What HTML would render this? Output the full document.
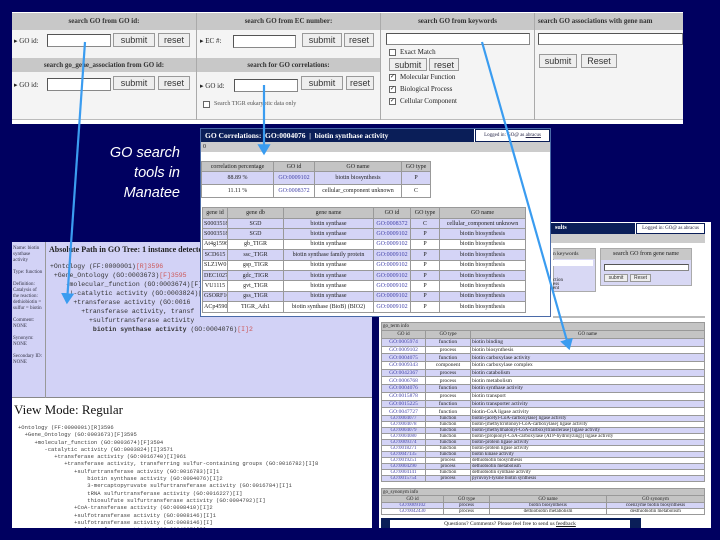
<!DOCTYPE html>
<html><head><meta charset="utf-8">
<style>
*{margin:0;padding:0;box-sizing:border-box}
body{width:720px;height:540px;background:#000060;position:relative;overflow:hidden;font-family:"Liberation Serif",serif;font-size:7px;color:#222}
.a{position:absolute}
.hd{background:#c8c8c8;text-align:center;font-weight:bold;font-size:7px;line-height:16px;color:#333}
.inp{position:absolute;background:#fff;border:1px solid #888;border-top-color:#555;border-left-color:#555}
.btn{position:absolute;background:#eee;border:1px solid #999;font-family:"Liberation Sans",sans-serif;font-size:9px;text-align:center;line-height:12px;color:#333}
.cb{position:absolute;width:7px;height:7px;border:1px solid #666;background:#fff;font-size:6px;line-height:5px;text-align:center}
table{border-collapse:collapse;position:absolute;table-layout:fixed}
td{border:1px solid #999;text-align:center;font-size:6px;line-height:1;white-space:nowrap;overflow:hidden;padding:0 1px}
.sm td{font-size:5px;line-height:5px;height:6px}
.md td{font-size:5.5px;line-height:6px;height:7.7px}
.g td{background:#c4c4c4}
.l td{background:#d4d4f6}
.w td{background:#fff}
.mono{font-family:"Liberation Mono",monospace;font-size:6.5px;white-space:pre;line-height:9px;color:#333}
.mono2{font-family:"Liberation Mono",monospace;font-size:5.5px;white-space:pre;line-height:7.3px;color:#444}
.bl{color:#44a}
</style></head><body>

<!-- top panel -->
<div class="a" style="left:12px;top:12px;width:671px;height:112px;background:#fff"></div>
<div class="a" style="left:12px;top:13px;width:671px;height:107px;background:#f4f4f4;border-bottom:1px solid #bbb"></div>
<div class="a hd" style="left:12px;top:13px;width:184px;height:17px">search GO from GO id:</div>
<div class="a hd" style="left:197px;top:13px;width:183px;height:17px">search GO from EC number:</div>
<div class="a hd" style="left:381px;top:13px;width:153px;height:17px">search GO from keywords</div>
<div class="a hd" style="left:535px;top:13px;width:148px;height:17px;text-align:left;padding-left:3px">search GO associations with gene nam</div>
<div class="a hd" style="left:12px;top:58px;width:184px;height:14px;line-height:14px">search go_gene_association from GO id:</div>
<div class="a hd" style="left:197px;top:58px;width:183px;height:14px;line-height:14px">search for GO correlations:</div>
<div class="a" style="left:196px;top:13px;width:1px;height:107px;background:#aaa"></div>
<div class="a" style="left:380px;top:13px;width:1px;height:107px;background:#aaa"></div>
<div class="a" style="left:534px;top:13px;width:1px;height:107px;background:#aaa"></div>
<div class="a" style="left:14px;top:37px;font-size:7px">▸ GO id:</div>
<div class="inp" style="left:47px;top:34px;width:64px;height:13px"></div>
<div class="btn" style="left:113px;top:33px;width:42px;height:14px">submit</div>
<div class="btn" style="left:158px;top:33px;width:32px;height:14px">reset</div>
<div class="a" style="left:200px;top:37px">▸ EC #:</div>
<div class="inp" style="left:233px;top:35px;width:63px;height:13px"></div>
<div class="btn" style="left:302px;top:33px;width:40px;height:14px">submit</div>
<div class="btn" style="left:344px;top:33px;width:30px;height:14px">reset</div>
<div class="a" style="left:14px;top:81px">▸ GO id:</div>
<div class="inp" style="left:47px;top:78px;width:64px;height:13px"></div>
<div class="btn" style="left:113px;top:76px;width:42px;height:14px">submit</div>
<div class="btn" style="left:158px;top:76px;width:32px;height:14px">reset</div>
<div class="a" style="left:200px;top:82px">▸ GO id:</div>
<div class="inp" style="left:234px;top:79px;width:64px;height:13px"></div>
<div class="btn" style="left:301px;top:76px;width:42px;height:14px">submit</div>
<div class="btn" style="left:346px;top:76px;width:28px;height:14px">reset</div>
<div class="cb" style="left:203px;top:101px"></div><div class="a" style="left:214px;top:101px;font-size:6px;color:#555">Search TIGR eukaryotic data only</div>
<div class="inp" style="left:386px;top:33px;width:144px;height:12px"></div>
<div class="cb" style="left:389px;top:49px"></div><div class="a" style="left:400px;top:48px">Exact Match</div>
<div class="btn" style="left:389px;top:58px;width:38px;height:13px">submit</div>
<div class="btn" style="left:429px;top:58px;width:30px;height:13px">reset</div>
<div class="cb" style="left:389px;top:74px">✓</div><div class="a" style="left:400px;top:73px">Molecular Function</div>
<div class="cb" style="left:389px;top:86px">✓</div><div class="a" style="left:400px;top:85px">Biological Process</div>
<div class="cb" style="left:389px;top:98px">✓</div><div class="a" style="left:400px;top:97px">Cellular Component</div>
<div class="inp" style="left:538px;top:33px;width:145px;height:12px"></div>
<div class="btn" style="left:539px;top:54px;width:38px;height:14px">submit</div>
<div class="btn" style="left:581px;top:54px;width:36px;height:14px">Reset</div>

<!-- caption -->
<div class="a" style="left:80px;top:143px;width:100px;text-align:right;color:#fff;font-family:'Liberation Sans',sans-serif;font-style:italic;font-size:14.5px;line-height:20px">GO search<br>tools in<br>Manatee</div>

<!-- right panel -->
<div class="a" style="left:379px;top:222px;width:332px;height:306px;background:#fff;overflow:hidden">
<div class="a" style="left:0;top:1px;width:256px;height:11px;background:#0a1e58;color:#fff;font-size:6px;font-weight:bold;line-height:11px;padding-left:176px">sults</div>
<div class="a" style="left:257px;top:1px;width:69px;height:11px;border:1px solid #0a1e58;font-size:5px;line-height:9px;text-align:center;color:#224">Logged in: GO@ as abracus</div>
<div class="a" style="left:0;top:12px;width:326px;height:9px;background:#ccc"></div>
<div class="a" style="left:174px;top:26px;width:43px;height:44px;background:#d8d8f4;border:1px solid #aaa"></div>
<div class="a" style="left:174px;top:27px;width:42px;height:10px;background:#c8c8c8;font-size:5.5px;line-height:10px">n keywords</div>
<div class="a" style="left:174px;top:38px;width:40px;height:6px;background:#fff"></div>
<div class="a" style="left:174px;top:57px;font-size:5px;line-height:4px">ction<br>ess<br>ent</div>
<div class="a" style="left:221px;top:26px;width:92px;height:38px;background:#d8d8f4;border:1px solid #aaa"></div>
<div class="a" style="left:222px;top:27px;width:90px;height:11px;background:#c8c8c8;font-size:6px;line-height:11px;text-align:center">search GO from gene name</div>
<div class="inp" style="left:225px;top:42px;width:85px;height:7px"></div>
<div class="btn" style="left:225px;top:52px;width:24px;height:8px;font-size:5px;line-height:6px">submit</div>
<div class="btn" style="left:251px;top:52px;width:21px;height:8px;font-size:5px;line-height:6px">Reset</div>
<div class="a" style="left:174px;top:94px;width:152px;height:2px;background:#bbb"></div>

<table style="left:2px;top:100px;width:324px">
<col style="width:44px"><col style="width:45px"><col>
<tr class="g sm"><td colspan="3" style="text-align:left;height:8px">go_term info</td></tr>
<tr class="g sm"><td style="height:8px">GO id</td><td>GO type</td><td>GO name</td></tr>
<tr class="l md"><td class="bl">GO:0005974</td><td>function</td><td style="text-align:left">biotin binding</td></tr>
<tr class="w md"><td class="bl">GO:0009102</td><td>process</td><td style="text-align:left">biotin biosynthesis</td></tr>
<tr class="l md"><td class="bl">GO:0004075</td><td>function</td><td style="text-align:left">biotin carboxylase activity</td></tr>
<tr class="w md"><td class="bl">GO:0009343</td><td>component</td><td style="text-align:left">biotin carboxylase complex</td></tr>
<tr class="l md"><td class="bl">GO:0042367</td><td>process</td><td style="text-align:left">biotin catabolism</td></tr>
<tr class="w md"><td class="bl">GO:0006768</td><td>process</td><td style="text-align:left">biotin metabolism</td></tr>
<tr class="l md"><td class="bl">GO:0004076</td><td>function</td><td style="text-align:left">biotin synthase activity</td></tr>
<tr class="w md"><td class="bl">GO:0015878</td><td>process</td><td style="text-align:left">biotin transport</td></tr>
<tr class="l md"><td class="bl">GO:0015225</td><td>function</td><td style="text-align:left">biotin transporter activity</td></tr>
<tr class="w md"><td class="bl">GO:0047727</td><td>function</td><td style="text-align:left">biotin-CoA ligase activity</td></tr>
<tr class="l sm"><td class="bl">GO:0004077</td><td>function</td><td style="text-align:left">biotin-[acetyl-CoA-carboxylase] ligase activity</td></tr>
<tr class="w sm"><td class="bl">GO:0004078</td><td>function</td><td style="text-align:left">biotin-[methylcrotonoyl-CoA-carboxylase] ligase activity</td></tr>
<tr class="l sm"><td class="bl">GO:0004079</td><td>function</td><td style="text-align:left">biotin-[methylmalonyl-CoA-carboxyltransferase] ligase activity</td></tr>
<tr class="w sm"><td class="bl">GO:0004080</td><td>function</td><td style="text-align:left">biotin-[propionyl-CoA-carboxylase (ATP-hydrolyzing)] ligase activity</td></tr>
<tr class="l sm"><td class="bl">GO:0009374</td><td>function</td><td style="text-align:left">biotin-protein ligase activity</td></tr>
<tr class="w sm"><td class="bl">GO:0018271</td><td>function</td><td style="text-align:left">biotin-protein ligase activity</td></tr>
<tr class="l sm"><td class="bl">GO:0047135</td><td>function</td><td style="text-align:left">biotin kinase activity</td></tr>
<tr class="w sm"><td class="bl">GO:0019251</td><td>process</td><td style="text-align:left">dethiobiotin biosynthesis</td></tr>
<tr class="l sm"><td class="bl">GO:0004290</td><td>process</td><td style="text-align:left">dethiobiotin metabolism</td></tr>
<tr class="w sm"><td class="bl">GO:0004141</td><td>function</td><td style="text-align:left">dethiobiotin synthase activity</td></tr>
<tr class="l sm"><td class="bl">GO:0015754</td><td>process</td><td style="text-align:left">pyruvoyl-lysine biotin synthesis</td></tr>
</table>
<table style="left:2px;top:266px;width:324px">
<col style="width:62px"><col style="width:46px"><col><col style="width:98px">
<tr class="g sm"><td colspan="4" style="text-align:left;height:7px">go_synonym info</td></tr>
<tr class="g sm"><td style="height:7px">GO id</td><td>GO type</td><td>GO name</td><td>GO synonym</td></tr>
<tr class="l sm"><td class="bl">GO:0009102</td><td>process</td><td>biotin biosynthesis</td><td>coenzyme biotin biosynthesis</td></tr>
<tr class="w sm"><td class="bl">GO:0042430</td><td>process</td><td>dethiobiotin metabolism</td><td>desthiobiotin metabolism</td></tr>
</table>
<div class="a" style="left:2px;top:296px;width:260px;height:10px;background:#0a1e58"></div>
<div class="a" style="left:11px;top:298px;width:240px;height:8px;background:#fff;font-size:5.5px;line-height:8px;text-align:center">Questions? Comments? Please feel free to send us <u>feedback</u></div>
</div>

<!-- left panel -->
<div class="a" style="left:12px;top:242px;width:360px;height:286px;background:#fff;overflow:hidden">
<div class="a" style="left:0;top:0;width:360px;height:156px;background:#d2d2f6;border-bottom:1px solid #888"></div>
<div class="a" style="left:33px;top:0;width:1px;height:156px;background:#999"></div>
<div class="a" style="left:1px;top:4px;width:31px;font-size:5px;line-height:6px;color:#334">Name: biotin synthase activity<br><br>Type: function<br><br>Definition: Catalysis of the reaction: dethiobiotin = sulfur = biotin<br><br>Comment: NONE<br><br>Synonym: NONE<br><br>Secondary ID: NONE</div>
<div class="a" style="left:37px;top:3px;font-size:8px;font-weight:bold;color:#222;white-space:nowrap">Absolute Path in GO Tree: 1 instance detected</div>
<div class="a mono" style="left:38px;top:20px">+Ontology (FF:0000001)<span style="color:#c55">[R]3596</span>
 +Gene_Ontology (GO:0003673)<span style="color:#c55">[F]3595</span>
    -molecular_function (GO:0003674)[F]
     |-catalytic activity (GO:0003824)[
      +transferase activity (GO:0016
        +transferase activity, transf
          +sulfurtransferase activity
           <b>biotin synthase activity</b> (GO:0004076)<span style="color:#c55">[I]2</span></div>
<div class="a" style="left:2px;top:160px;font-size:13px;color:#111">View Mode: Regular</div>
<div class="a mono2" style="left:6px;top:182px">+Ontology (FF:0000001)[R]3596
  +Gene_Ontology (GO:0003673)[F]3595
     +molecular_function (GO:0003674)[F]3594
        -catalytic activity (GO:0003824)[I]3571
           +transferase activity (GO:0016740)[I]961
              +transferase activity, transferring sulfur-containing groups (GO:0016782)[I]8
                 +sulfurtransferase activity (GO:0016783)[I]1
                     biotin synthase activity (GO:0004076)[I]2
                     3-mercaptopyruvate sulfurtransferase activity (GO:0016784)[I]1
                     tRNA sulfurtransferase activity (GO:0016227)[I]
                     thiosulfate sulfurtransferase activity (GO:0004792)[I]
                 +CoA-transferase activity (GO:0008410)[I]2
                 +sulfotransferase activity (GO:0008146)[I]1
                 +sulfotransferase activity (GO:0008146)[I]
              geranyltransferase activity (GO:0004337)[I]</div>
</div>

<!-- GO correlations panel -->
<div class="a" style="left:200px;top:128px;width:351px;height:189px;background:#fff;border:1px solid #4a6aa8"></div>
<div class="a" style="left:201px;top:129px;width:273px;height:13px;background:#0a1e58;color:#fff;font-weight:bold;font-size:7.5px;line-height:13px;padding-left:4px">GO Correlations:&nbsp; GO:0004076 &nbsp;|&nbsp; biotin synthase activity</div>
<div class="a" style="left:475px;top:129px;width:75px;height:13px;border:1px solid #0a1e58;font-size:5px;line-height:11px;text-align:center;color:#224">Logged in: GO@ as <u>abracus</u></div>
<div class="a" style="left:201px;top:142px;width:349px;height:10px;background:#ccc;font-size:6px;line-height:10px;padding-left:2px">0</div>
<table style="left:201px;top:161px;width:230px">
<col style="width:72px"><col style="width:41px"><col style="width:87px"><col>
<tr class="g"><td style="height:10px">correlation percentage</td><td>GO id</td><td>GO name</td><td>GO type</td></tr>
<tr class="l"><td style="height:13px">88.89 %</td><td class="bl">GO:0009102</td><td>biotin biosynthesis</td><td>P</td></tr>
<tr class="w"><td style="height:13px">11.11 %</td><td class="bl">GO:0008372</td><td>cellular_component unknown</td><td>C</td></tr>
</table>
<table style="left:202px;top:207px;width:324px">
<col style="width:25px"><col style="width:56px"><col style="width:90px"><col style="width:37px"><col style="width:29px"><col>
<tr class="g"><td style="height:11px">gene id</td><td>gene db</td><td>gene name</td><td>GO id</td><td>GO type</td><td>GO name</td></tr>
<tr class="l"><td style="height:10.4px">S0003518</td><td>SGD</td><td>biotin synthase</td><td class="bl">GO:0008372</td><td>C</td><td>cellular_component unknown</td></tr>
<tr class="l"><td style="height:10.4px">S0003518</td><td>SGD</td><td>biotin synthase</td><td class="bl">GO:0009102</td><td>P</td><td>biotin biosynthesis</td></tr>
<tr class="w"><td style="height:10.4px">At4g1596</td><td>gb_TIGR</td><td>biotin synthase</td><td class="bl">GO:0009102</td><td>P</td><td>biotin biosynthesis</td></tr>
<tr class="l"><td style="height:10.4px">SCD615</td><td>ssc_TIGR</td><td>biotin synthase family protein</td><td class="bl">GO:0009102</td><td>P</td><td>biotin biosynthesis</td></tr>
<tr class="w"><td style="height:10.4px">SLZ1W0</td><td>gsp_TIGR</td><td>biotin synthase</td><td class="bl">GO:0009102</td><td>P</td><td>biotin biosynthesis</td></tr>
<tr class="l"><td style="height:10.4px">DEC1027</td><td>gdc_TIGR</td><td>biotin synthase</td><td class="bl">GO:0009102</td><td>P</td><td>biotin biosynthesis</td></tr>
<tr class="w"><td style="height:10.4px">VU1115</td><td>gvt_TIGR</td><td>biotin synthase</td><td class="bl">GO:0009102</td><td>P</td><td>biotin biosynthesis</td></tr>
<tr class="l"><td style="height:10.4px">GSORF1608</td><td>gss_TIGR</td><td>biotin synthase</td><td class="bl">GO:0009102</td><td>P</td><td>biotin biosynthesis</td></tr>
<tr class="w"><td style="height:10.4px">ACp4590</td><td>TIGR_Ath1</td><td>biotin synthase (BioB) (BIO2)</td><td class="bl">GO:0009102</td><td>P</td><td>biotin biosynthesis</td></tr>
</table>

<!-- arrows -->
<svg class="a" style="left:0;top:0" width="720" height="540">
<defs><marker id="m" markerWidth="6" markerHeight="6" refX="4" refY="3" orient="auto" markerUnits="strokeWidth"><path d="M0,0 L5,3 L0,6 Z" fill="#3a9cf0"/></marker></defs>
<g stroke="#3a9cf0" stroke-width="2.2" fill="none" marker-end="url(#m)">
<line x1="85" y1="42" x2="67" y2="302"/>
<line x1="264" y1="85" x2="264" y2="153"/>
<line x1="482" y1="42" x2="569" y2="348"/>
</g></svg>
</body></html>
